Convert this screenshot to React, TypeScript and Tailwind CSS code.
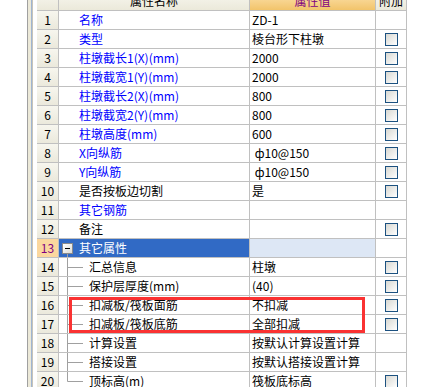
type Row = {
  n: number;
  name: string;
  value?: string;
  blue?: boolean;
  check?: boolean;
  tree?: "mid" | "last";
};

const rows: Row[] = [
  { n: 1, name: "名称", value: "ZD-1", blue: true },
  { n: 2, name: "类型", value: "棱台形下柱墩", blue: true, check: true },
  { n: 3, name: "柱墩截长1(X)(mm)", value: "2000", blue: true, check: true },
  { n: 4, name: "柱墩截宽1(Y)(mm)", value: "2000", blue: true, check: true },
  { n: 5, name: "柱墩截长2(X)(mm)", value: "800", blue: true, check: true },
  { n: 6, name: "柱墩截宽2(Y)(mm)", value: "800", blue: true, check: true },
  { n: 7, name: "柱墩高度(mm)", value: "600", blue: true, check: true },
  { n: 8, name: "X向纵筋", value: " ф10@150", blue: true, check: true },
  { n: 9, name: "Y向纵筋", value: " ф10@150", blue: true, check: true },
  { n: 10, name: "是否按板边切割", value: "是", check: true },
  { n: 11, name: "其它钢筋", blue: true },
  { n: 12, name: "备注", check: true },
];

const subRows: Row[] = [
  { n: 14, name: "汇总信息", value: "柱墩", check: true, tree: "mid" },
  { n: 15, name: "保护层厚度(mm)", value: "(40)", check: true, tree: "mid" },
  { n: 16, name: "扣减板/筏板面筋", value: "不扣减", check: true, tree: "mid" },
  { n: 17, name: "扣减板/筏板底筋", value: "全部扣减", check: true, tree: "mid" },
  { n: 18, name: "计算设置", value: "按默认计算设置计算", tree: "mid" },
  { n: 19, name: "搭接设置", value: "按默认搭接设置计算", tree: "mid" },
  { n: 20, name: "顶标高(m)", value: "筏板底标高", check: true, tree: "last" },
];

function Checkbox() {
  return (
    <div className="w-[13px] h-[13px] border border-[#1c5180] bg-gradient-to-br from-[#d8d8d2] to-[#ffffff]" />
  );
}

function TreeLine({ last }: { last?: boolean }) {
  return (
    <svg width="30" height="18" className="shrink-0">
      <line x1="8.5" y1="0" x2="8.5" y2={last ? 9.5 : 18} stroke="#a0a0a0" />
      <line x1="8.5" y1="9.5" x2="24" y2="9.5" stroke="#a0a0a0" />
    </svg>
  );
}

function DataRow({ r }: { r: Row }) {
  return (
    <div className="flex h-[19px] border-b border-[#c0c0c0]">
      <div className="w-[22px] shrink-0 border-r border-[#c0c0c0] bg-gradient-to-b from-[#f7f6ee] to-[#ebe9dc] flex items-center justify-center text-black">
        {r.n}
      </div>
      <div
        className={
          "w-[191px] shrink-0 border-r border-[#c0c0c0] flex items-center whitespace-nowrap " +
          (r.blue ? "text-[#0000ff] " : "text-black ") +
          (r.tree ? "" : "pl-[20px]")
        }
      >
        {r.tree && <TreeLine last={r.tree === "last"} />}
        {r.name}
      </div>
      <div className="w-[126px] shrink-0 border-r border-[#c0c0c0] flex items-center pl-[2px] text-black whitespace-pre">
        {r.value ?? ""}
      </div>
      <div className="w-[31px] shrink-0 border-r border-[#c0c0c0] flex items-center justify-center">
        {r.check && <Checkbox />}
      </div>
    </div>
  );
}

export default function App() {
  return (
    <div
      className="relative w-[421px] h-[387px] overflow-hidden bg-white flex text-[12px] leading-[18px]"
      style={{ fontFamily: '"Noto Sans CJK SC", "Liberation Sans", sans-serif' }}
    >
      <div className="w-[27px] shrink-0" />
      {/* window frame */}
      <div className="w-[1px] shrink-0 bg-[#a0a0a0]" />
      <div className="w-[3px] shrink-0 bg-[#ece9d8]" />
      <div className="w-[1px] shrink-0 bg-[#9fb5d2]" />
      <div className="w-[1px] shrink-0 bg-[#c8c4b8]" />
      <div className="w-[4px] shrink-0 bg-white" />

      <div className="flex flex-col shrink-0">
        {/* header */}
        <div className="flex h-[20px] -mt-[8px] border-b border-[#c0c0c0]">
          <div className="w-[22px] shrink-0 border-r border-[#c0c0c0] bg-gradient-to-b from-[#f8f7f0] to-[#ebe9da]" />
          <div className="w-[191px] shrink-0 border-r border-[#c0c0c0] bg-gradient-to-b from-[#f8f7f0] to-[#ebe9da] flex items-center justify-center text-black">
            属性名称
          </div>
          <div className="w-[126px] shrink-0 border-r border-[#c0c0c0] bg-gradient-to-b from-[#fce3ae] to-[#f2c46a] flex items-center justify-center text-[#800080]">
            属性值
          </div>
          <div className="w-[31px] shrink-0 border-r border-[#c0c0c0] bg-gradient-to-b from-[#f8f7f0] to-[#ebe9da] flex items-center justify-center text-black">
            附加
          </div>
        </div>

        {rows.map((r) => (
          <DataRow key={r.n} r={r} />
        ))}

        {/* group row */}
        <div className="flex h-[19px] border-b border-[#c0c0c0]">
          <div className="w-[22px] shrink-0 border-r border-[#c0c0c0] bg-[#fbd79e] flex items-center justify-center text-[#800080]">
            13
          </div>
          <div className="w-[191px] shrink-0 border-r border-[#c0c0c0] bg-[#316ac5] flex items-center text-white relative">
            <div className="ml-[3px] w-[11px] h-[11px] border border-[#8a8a8a] bg-gradient-to-br from-[#ffffff] to-[#dcdcd6] flex items-center justify-center">
              <div className="w-[5px] h-[1px] bg-black" />
            </div>
            <span className="ml-[6px]">其它属性</span>
            <div className="absolute left-[8px] top-[15px] w-[1px] h-[3px] bg-[#a0a0a0]" />
          </div>
          <div className="w-[126px] shrink-0 border-r border-[#c0c0c0] bg-[#dde7f5]" />
          <div className="w-[31px] shrink-0 border-r border-[#c0c0c0]" />
        </div>

        {subRows.map((r) => (
          <DataRow key={r.n} r={r} />
        ))}
      </div>

      {/* red highlight */}
      <div className="absolute left-[69px] top-[297px] w-[296px] h-[36px] border-[3px] border-[#fa3232]" />
    </div>
  );
}
